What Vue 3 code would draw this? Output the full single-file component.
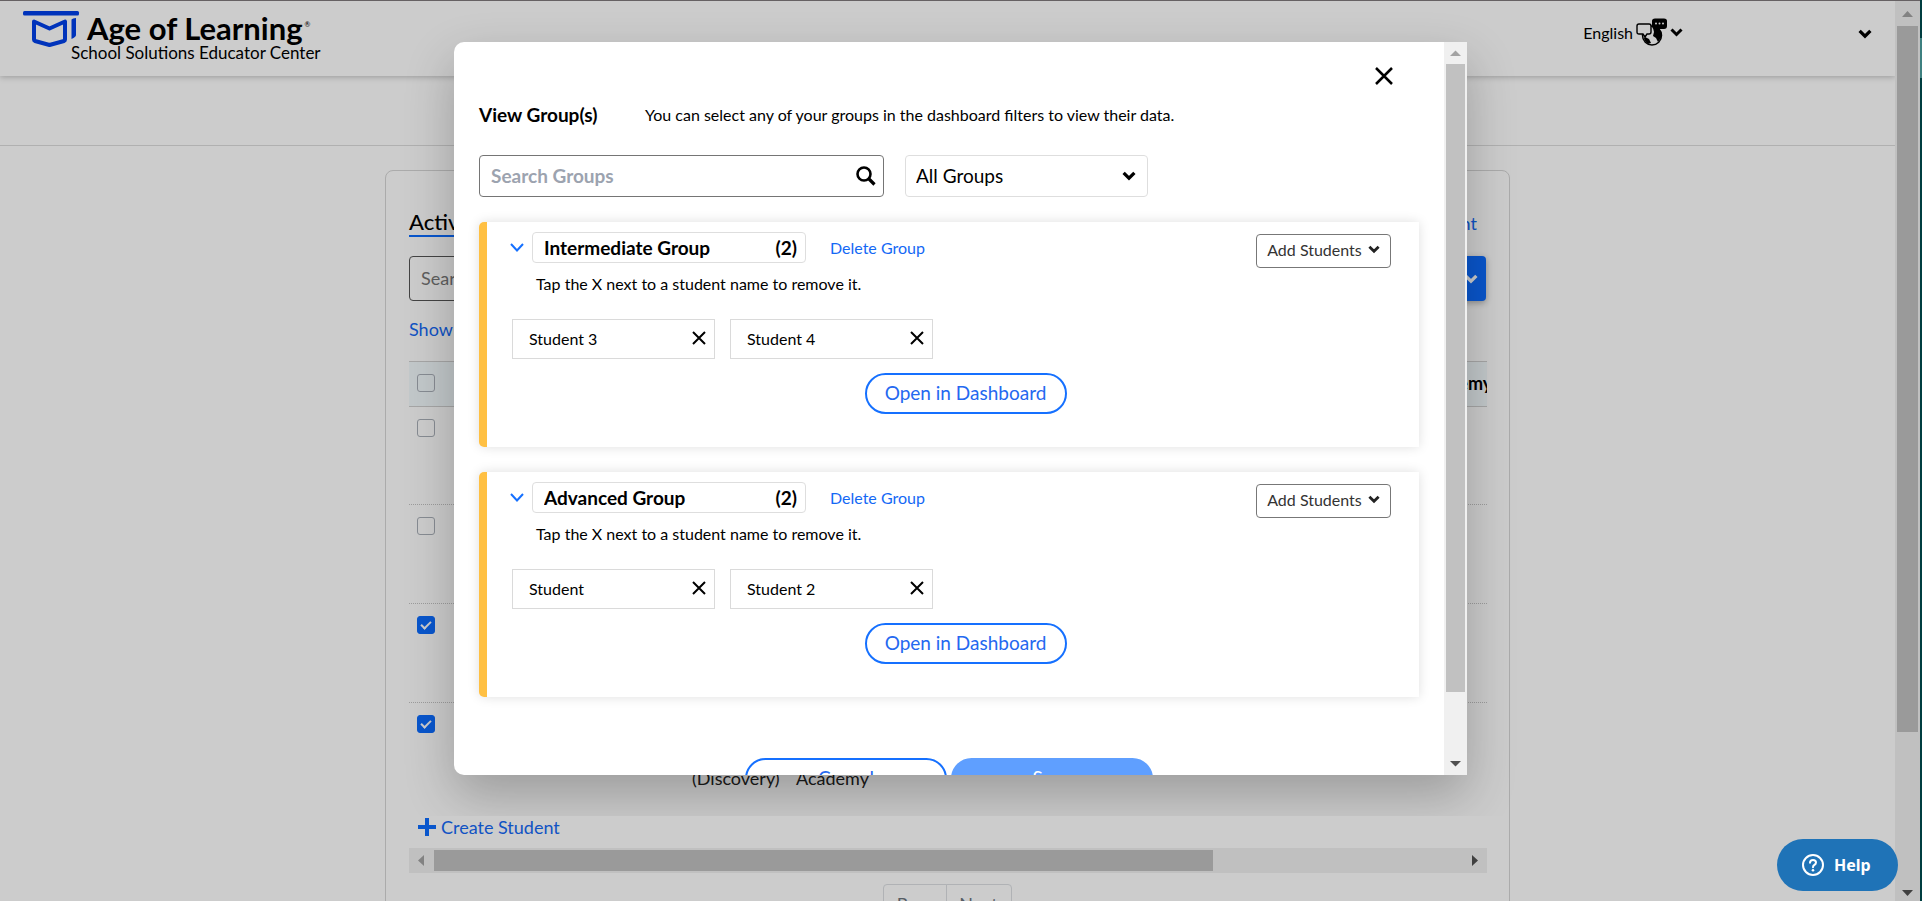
<script setup>
import { ref } from 'vue'

const groups = ref([
  { id: 'g1', name: 'Intermediate Group', students: ['Student 3', 'Student 4'] },
  { id: 'g2', name: 'Advanced Group', students: ['Student', 'Student 2'] }
])

const rows = ref([
  { id: 'r1', checked: false },
  { id: 'r2', checked: false },
  { id: 'r3', checked: true },
  { id: 'r4', checked: true, product: '(Discovery)', program: 'Academy' }
])

const filter = ref('All Groups')
const search = ref('')
</script>

<template>
  <div class="screen">
    <div class="window">
      <div class="page">
        <header class="topbar">
          <div class="brand">
            <div class="brand-row">
              <svg class="logo" width="57" height="37" viewBox="0 0 57 37" aria-hidden="true">
                <rect x="0" y="0" width="56" height="4.400" rx="1.500" fill="#0040ea" />
                <path d="M11 10.500 L26.500 17.500 L42 10.500 V28.500 Q42 29.500 41 30 L26.500 34 L12 30 Q11 29.500 11 28.500 Z" fill="none" stroke="#0040ea" stroke-width="4" stroke-linejoin="round" />
                <path d="M48.500 8.500 Q49.500 7 53 7 V24 Q53 26 48.500 28 Z" fill="#0040ea" />
              </svg>
              <span class="brand-name">Age of Learning</span><span class="reg">®</span>
            </div>
            <div class="brand-sub">School Solutions Educator Center</div>
          </div>
          <button class="lang" type="button">
            <span>English</span>
            <svg width="31" height="29" viewBox="0 0 31 29" aria-hidden="true">
              <circle cx="16" cy="17.500" r="9.500" fill="#fff" stroke="#000" stroke-width="1.500" />
              <path d="M17 10 L22 9 Q26 13 25 20 L22 24 L20 20 L17 18 L18 14 Z M9 19 L13 21 L15 25 L12 26 Q8 23 8 20 Z" fill="#000" />
              <path d="M3 6 H13 Q15 6 15 8 V14 Q15 16 13 16 H11 L9 19 L7 16 H3 Q1 16 1 14 V8 Q1 6 3 6 Z" fill="#fff" stroke="#000" stroke-width="1.400" />
              <path d="M19 0.500 H28 Q31 0.500 31 3 V8 Q31 11 28 11 H23 L20 14 V11 H19 Q16 11 16 8 V3 Q16 0.500 19 0.500 Z" fill="#000" />
              <circle cx="20" cy="5.500" r="1" fill="#fff" /><circle cx="23.500" cy="5.500" r="1" fill="#fff" /><circle cx="27" cy="5.500" r="1" fill="#fff" />
            </svg>
            <svg width="13" height="9" viewBox="0 0 13 9" aria-hidden="true"><path d="M1.500 1.500 L6.500 6.500 L11.500 1.500" fill="none" stroke="#000" stroke-width="3" /></svg>
          </button>
          <button class="account" type="button" aria-label="Account menu">
            <svg width="14" height="10" viewBox="0 0 13 9" aria-hidden="true"><path d="M1.500 1.500 L6.500 6.500 L11.500 1.500" fill="none" stroke="#000" stroke-width="3" /></svg>
          </button>
        </header>
        <div class="subbar"></div>

        <main class="roster">
          <div class="roster-head">
            <h2>Active</h2>
            <a href="#">Student</a>
          </div>
          <div class="roster-tools">
            <input type="text" placeholder="Search" aria-label="Search" />
            <button type="button" class="primary" aria-label="Options">
              <svg width="14" height="10" viewBox="0 0 13 9" aria-hidden="true"><path d="M1.500 1.500 L6.500 6.500 L11.500 1.500" fill="none" stroke="#fff" stroke-width="3" /></svg>
            </button>
          </div>
          <a class="show" href="#">Show</a>
          <div class="table-wrap">
            <table>
              <colgroup><col class="c1" /><col class="c2" /><col class="c3" /><col class="c4" /></colgroup>
              <thead>
                <tr>
                  <th><input type="checkbox" class="box" aria-label="All rows" /></th>
                  <th></th><th></th>
                  <th>Academy</th>
                </tr>
              </thead>
              <tbody>
                <tr v-for="row in rows" :key="row.id">
                  <td><input v-model="row.checked" type="checkbox" class="box" aria-label="Row" /></td>
                  <td class="low">{{ row.product }}</td>
                  <td class="low">{{ row.program }}</td>
                  <td></td>
                </tr>
              </tbody>
            </table>
          </div>
          <a class="create" href="#">
            <svg width="18" height="18" viewBox="0 0 18 18" aria-hidden="true"><path d="M9 0 V18 M0 9 H18" stroke="#0c6cff" stroke-width="4" /></svg>
            <span>Create Student</span>
          </a>
          <div class="hbar">
            <svg width="25" height="25" viewBox="0 0 25 25" aria-hidden="true"><path d="M15 7 V18 L9 12.500 Z" fill="#a3a3a3" /></svg>
            <div class="hthumb"></div>
            <svg width="25" height="25" viewBox="0 0 25 25" aria-hidden="true"><path d="M10 7 V18 L16 12.500 Z" fill="#505050" /></svg>
          </div>
          <nav class="pager" aria-label="Pages">
            <button type="button">Prev</button><button type="button">Next</button>
          </nav>
        </main>
      </div>

      <div class="vbar">
        <svg width="25" height="25" viewBox="0 0 25 25" aria-hidden="true"><path d="M7 16 H18 L12.500 10 Z" fill="#a3a3a3" /></svg>
        <div class="vthumb"></div>
        <div class="vrest"></div>
        <svg width="25" height="18" viewBox="0 0 25 18" aria-hidden="true"><path d="M7 7 H18 L12.500 13 Z" fill="#505050" /></svg>
      </div>
      <div class="shade"></div>
    </div>
    <div class="edge"></div>

    <div class="layer">
      <section class="modal" role="dialog" aria-labelledby="modal-title">
        <div class="content">
          <div class="close-row">
            <button type="button" aria-label="Close">
              <svg width="18" height="18" viewBox="0 0 18 18" aria-hidden="true"><path d="M1 1 L17 17 M17 1 L1 17" stroke="#000" stroke-width="2.500" /></svg>
            </button>
          </div>
          <div class="title-row">
            <h1 id="modal-title">View Group(s)</h1>
            <p>You can select any of your groups in the dashboard filters to view their data.</p>
          </div>
          <div class="filter-row">
            <label class="search">
              <input v-model="search" type="text" placeholder="Search Groups" aria-label="Search Groups" />
              <svg width="20" height="20" viewBox="0 0 20 20" aria-hidden="true"><circle cx="8" cy="8" r="6.500" fill="none" stroke="#000" stroke-width="2.600" /><path d="M12.500 12.500 L18.500 18.500" stroke="#000" stroke-width="3.200" /></svg>
            </label>
            <label class="picker">
              <select v-model="filter" aria-label="Group filter"><option>All Groups</option></select>
              <svg width="14" height="10" viewBox="0 0 13 9" aria-hidden="true"><path d="M1.500 1.500 L6.500 6.500 L11.500 1.500" fill="none" stroke="#000" stroke-width="3" /></svg>
            </label>
          </div>

          <article v-for="group in groups" :key="group.id" class="group">
            <div class="group-head">
              <button class="toggle" type="button" aria-label="Collapse group">
                <svg width="14" height="9" viewBox="0 0 14 9" aria-hidden="true"><path d="M1 1 L7 7.500 L13 1" fill="none" stroke="#1570ff" stroke-width="2" /></svg>
              </button>
              <label class="name">
                <input v-model="group.name" type="text" aria-label="Group name" />
                <span>({{ group.students.length }})</span>
              </label>
              <a class="delete" href="#">Delete Group</a>
              <button class="add" type="button">
                <span>Add Students</span>
                <svg width="12" height="9" viewBox="0 0 13 9" aria-hidden="true"><path d="M1.500 1.500 L6.500 6.500 L11.500 1.500" fill="none" stroke="#222" stroke-width="3" /></svg>
              </button>
            </div>
            <p class="hint">Tap the X next to a student name to remove it.</p>
            <ul class="chips">
              <li v-for="student in group.students" :key="student">
                <span>{{ student }}</span>
                <button type="button" :aria-label="'Remove ' + student">
                  <svg width="14" height="14" viewBox="0 0 14 14" aria-hidden="true"><path d="M1 1 L13 13 M13 1 L1 13" stroke="#000" stroke-width="2" /></svg>
                </button>
              </li>
            </ul>
            <button class="pill open" type="button">Open in Dashboard</button>
          </article>

          <div class="actions">
            <button class="pill" type="button">Cancel</button>
            <button class="pill save" type="button">Save</button>
          </div>
        </div>
        <div class="mbar">
          <svg width="23" height="22" viewBox="0 0 23 22" aria-hidden="true"><path d="M6 14 H17 L11.500 8.500 Z" fill="#a3a3a3" /></svg>
          <div class="mthumb"></div>
          <div class="mrest"></div>
          <svg width="23" height="22" viewBox="0 0 23 22" aria-hidden="true"><path d="M6 8 H17 L11.500 13.500 Z" fill="#505050" /></svg>
        </div>
      </section>
    </div>

    <button class="help" type="button">
      <svg width="22" height="22" viewBox="0 0 22 22" aria-hidden="true">
        <circle cx="11" cy="11" r="10" fill="none" stroke="#fff" stroke-width="2" />
        <path d="M8 8.800 Q8 6 11 6 Q14 6 14 8.600 Q14 10.200 12.300 11 Q11 11.600 11 13.300" fill="none" stroke="#fff" stroke-width="2" stroke-linecap="round" />
        <circle cx="11" cy="16.300" r="1.300" fill="#fff" />
      </svg>
      <span>Help</span>
    </button>
  </div>
</template>

<style>
body { margin: 0; overflow: hidden; }
</style>

<style scoped>
* { box-sizing: border-box; }
.screen {
  position: relative;
  display: flex;
  height: 100vh;
  overflow: hidden;
  font-family: Lato, "Liberation Sans", sans-serif;
  font-size: 16px;
  color: #000;
}
button, input, select { font: inherit; color: inherit; margin: 0; padding: 0; border: 0; background: none; }
button { cursor: pointer; }
input:focus, select:focus { outline: none; }
a { color: #1468f5; text-decoration: none; }
h1, h2, p, ul { margin: 0; padding: 0; }
svg { display: block; flex: none; }

.window { position: relative; flex: 1; display: flex; min-width: 0; border-top: 1px solid #807a7c; background: #fff; }
.edge { width: 2px; background: linear-gradient(#003d40 38px, #3e8080 38px, #3e8080 78px, #003d40 78px); }
.shade { position: absolute; inset: 0; top: -1px; background: rgba(0, 0, 0, 0.2); }
.page { flex: 1; min-width: 0; overflow: hidden; }

.topbar { display: flex; align-items: flex-start; height: 75px; padding-left: 23px; padding-right: 23px; box-shadow: 0 1px 6px rgba(0, 0, 0, 0.25); }
.brand { padding-top: 10px; flex: 1; }
.brand-row { display: flex; height: 34px; }
.logo { margin-right: 7px; }
.brand-name { font-size: 31px; line-height: 34px; font-weight: 700; }
.reg { font-size: 7px; line-height: 26px; margin-left: 2px; }
.brand-sub { padding-left: 48px; font-size: 17px; line-height: 16px; }
.lang { display: flex; align-items: center; gap: 3px; height: 64px; padding-bottom: 2px; font-size: 16px; margin-right: 175px; }
.account { height: 66px; }
.subbar { height: 70px; border-bottom: 1px solid #dcdcdc; }

.roster { width: 1125px; max-width: 100%; margin: 24px auto 0; height: 900px; padding: 0 22px 0 23px; border: 1px solid #d6d6d6; border-radius: 8px; }
.roster-head { display: flex; justify-content: space-between; padding-top: 35px; padding-right: 10px; height: 85px; }
.roster-head h2 { height: 31px; font-size: 22px; line-height: 31px; font-weight: 500; border-bottom: 2px solid #0c6cff; }
.roster-head a { font-size: 18px; line-height: 34px; }
.roster-tools { display: flex; justify-content: space-between; padding-right: 1px; }
.roster-tools input { width: 300px; height: 45px; padding: 0 0 2px 11px; border: 1px solid #555; border-radius: 4px; font-size: 18px; }
.roster-tools input::placeholder { color: #777; opacity: 1; }
.primary { display: flex; align-items: center; justify-content: flex-end; width: 160px; height: 45px; padding-right: 8px; border-radius: 4px; background: #0c6cff; box-shadow: 0 2px 6px rgba(0, 0, 0, 0.3); }
.show { display: block; padding-top: 17px; height: 60px; font-size: 18px; line-height: 22px; }
.table-wrap { overflow: hidden; height: 449px; }
table { width: 1400px; table-layout: fixed; border-collapse: collapse; }
.c1 { width: 283px; }
.c2 { width: 104px; }
.c3 { width: 620px; }
th { height: 45px; padding: 0 0 2px; text-align: left; font-size: 18px; font-weight: 700; background: #f3fafd; border-top: 1px solid #d0d0d0; border-bottom: 1px solid #d0d0d0; }
th:last-child { padding-left: 2px; }
td { height: 99px; padding: 12px 0 0; vertical-align: top; border-bottom: 1px dotted #c4c4c4; font-size: 18px; }
tbody tr:first-child td { height: 98px; }
tbody tr:last-child td { border-bottom: 0; }
td.low { padding: 0 0 13px; vertical-align: bottom; color: #222; }
.box { appearance: none; display: block; width: 18px; height: 18px; margin-left: 8px; border: 1px solid #a9afb8; border-radius: 3px; }
.box:checked { border-color: #0c6cff; background: #0c6cff; display: grid; place-items: center; }
.box:checked::before { content: ""; width: 8px; height: 4px; margin-bottom: 2px; border-left: 2px solid #fff; border-bottom: 2px solid #fff; transform: rotate(-45deg); }
.create { display: flex; align-items: center; gap: 5px; height: 38px; padding-left: 9px; padding-bottom: 4px; font-size: 18px; line-height: 22px; }
.hbar { display: flex; height: 25px; background: #f0f0f0; }
.hthumb { flex: 779; margin: 2px 0; background: #c1c1c1; }
.hbar svg:last-child { margin-left: 249px; }
.pager { display: flex; justify-content: center; margin-top: 11px; padding-right: 2px; }
.pager button { width: 64px; height: 38px; padding-top: 2px; border: 1px solid #dcdfe3; color: #6c757d; font-size: 18px; }
.pager button:first-child { border-radius: 4px 0 0 4px; }
.pager button + button { width: 66px; margin-left: -1px; border-radius: 0 4px 4px 0; }

.vbar { display: flex; flex-direction: column; width: 25px; background: #f0f0f0; }
.vthumb { flex: 706; margin: 0 2px; background: #c1c1c1; }
.vrest { flex: 151; }

.layer { position: absolute; inset: 0 1px 85px 0; display: flex; justify-content: center; align-items: stretch; padding: 42px 0 41px; overflow: hidden; }
.modal { display: flex; width: 1013px; max-width: 100%; background: #fff; border-radius: 10px 0 0 10px; overflow: hidden; box-shadow: 0 20px 50px rgba(0, 0, 0, 0.24); }
.content { flex: 1; min-width: 0; padding: 0 25px; overflow: hidden; }
.mbar { display: flex; flex-direction: column; width: 23px; background: #f0f0f0; }
.mthumb { flex: 628; margin: 0 2px; background: #c1c1c1; }
.mrest { flex: 61; }

.close-row { display: flex; justify-content: flex-end; padding: 25px 26px 0 0; height: 61px; }
.close-row button { height: 18px; }
.title-row { display: flex; align-items: center; height: 24px; }
.title-row h1 { width: 166px; font-size: 19px; line-height: 24px; font-weight: 700; }
.title-row p { font-size: 16px; line-height: 24px; }
.filter-row { display: flex; gap: 21px; margin-top: 28px; margin-bottom: 25px; }
.search { display: flex; align-items: center; width: 405px; height: 42px; padding: 0 7px 0 11px; border: 1px solid #757575; border-radius: 4px; }
.search input { flex: 1; min-width: 0; padding-bottom: 2px; font-size: 19px; font-weight: 700; }
.search input::placeholder { color: #9ca3af; opacity: 1; }
.picker { display: grid; align-items: center; width: 243px; height: 42px; border: 1px solid #dedede; border-radius: 4px; }
.picker select { grid-area: 1 / 1; appearance: none; height: 40px; padding: 0 0 2px 10px; font-size: 19px; }
.picker svg { grid-area: 1 / 1; justify-self: end; margin-right: 11px; pointer-events: none; }

.group { height: 225px; margin-bottom: 25px; padding: 10px 0 0 25px; border-left: 8px solid #ffc043; border-radius: 5px 0 0 5px; box-shadow: 0 0 12px rgba(0, 0, 0, 0.13); }
.group-head { display: flex; align-items: flex-start; height: 36px; padding-right: 28px; }
.toggle { width: 20px; height: 31px; display: flex; align-items: center; margin-left: -2px; }
.name { display: flex; align-items: center; width: 274px; height: 31px; margin-left: 2px; padding: 0 8px 1px 11px; border: 1px solid #dedede; border-radius: 4px; font-size: 19px; font-weight: 700; }
.name input { flex: 1; min-width: 0; }
.delete { margin-left: 24px; flex: 1; font-size: 16px; line-height: 32px; }
.add { display: flex; align-items: center; justify-content: center; gap: 6px; width: 135px; height: 34px; margin-top: 2px; padding-bottom: 3px; border: 1px solid #777; border-radius: 4px; color: #333; font-size: 16px; }
.hint { margin-top: 4px; padding-left: 24px; font-size: 16px; line-height: 24px; }
.chips { display: flex; gap: 15px; margin-top: 23px; list-style: none; }
.chips li { display: flex; align-items: center; justify-content: space-between; width: 203px; height: 40px; padding: 0 8px 2px 16px; border: 1px solid #dadada; }
.pill { display: block; width: 202px; height: 41px; padding-bottom: 3px; border: 2px solid #1570ff; border-radius: 21px; color: #2468f0; font-size: 19px; }
.open { margin: 14px auto 0; }
.actions { display: flex; justify-content: center; gap: 4px; margin-top: 61px; }
.save { border-color: #5f9fff; background: #5f9fff; color: #fff; }

.help { position: absolute; right: 24px; bottom: 10px; display: flex; align-items: center; gap: 10px; width: 121px; height: 52px; padding-left: 25px; border-radius: 26px; background: #1f73b7; color: #fff; font-family: "Noto Sans", "Open Sans", sans-serif; font-size: 16px; font-weight: 700; }
</style>
